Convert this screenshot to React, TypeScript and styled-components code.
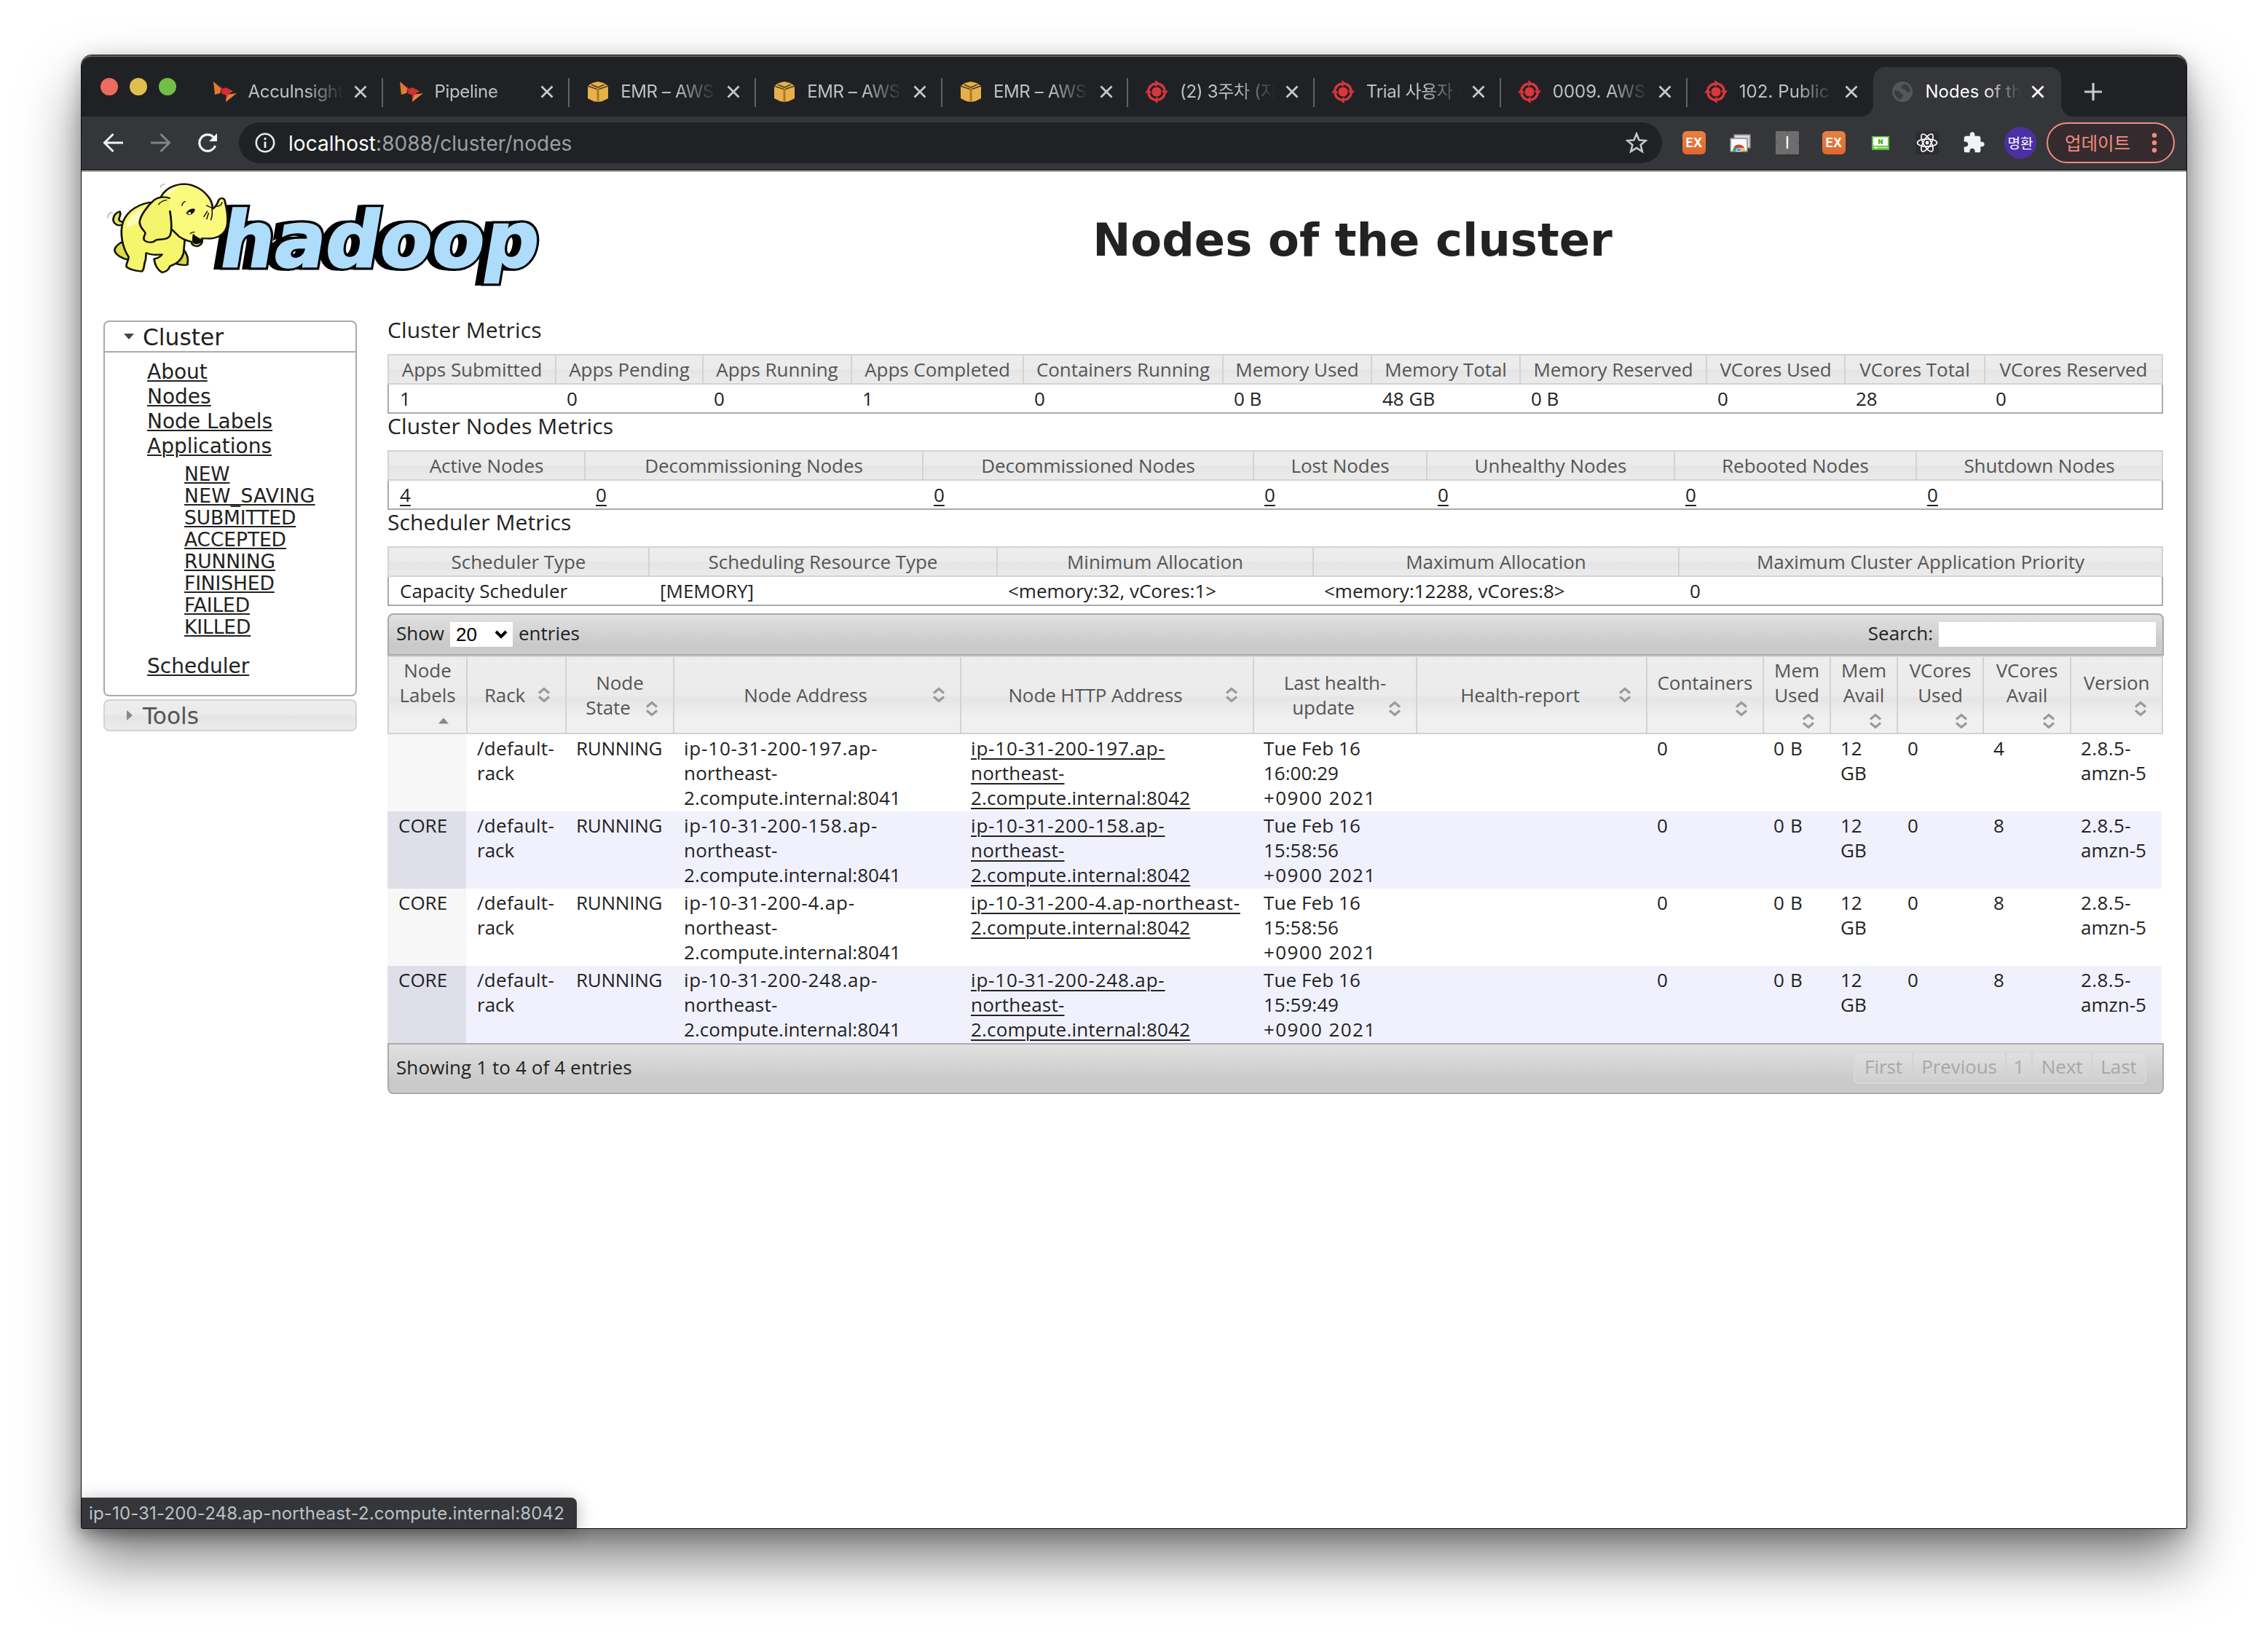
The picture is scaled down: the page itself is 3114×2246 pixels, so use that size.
import React from "react";
import styled, { createGlobalStyle, css } from "styled-components";

const chromeFont = `Inter, "Noto Sans CJK KR", sans-serif`;
const pageFont = `"Open Sans", "Noto Sans CJK KR", sans-serif`;
const navFont = `"DejaVu Sans", sans-serif`;

const GlobalStyle = createGlobalStyle`
  * { box-sizing: border-box; }
  body { margin: 0; background: #fff; }
`;

/* ---------- window ---------- */

const Desktop = styled.div`
  width: 3114px;
  height: 2246px;
  padding: 76px 112px 0;
  overflow: hidden;
  background: #fff;
`;

const BrowserWindow = styled.div`
  position: relative;
  display: flex;
  flex-direction: column;
  width: 2890px;
  height: 2022px;
  border-radius: 14px 14px 2px 2px;
  background: #fff;
  box-shadow: 0 0 0 1px #0a0d0a, 0 44px 80px rgba(0, 0, 0, 0.5), 0 8px 28px rgba(0, 0, 0, 0.25);
`;

const TabStrip = styled.div`
  display: flex;
  align-items: flex-end;
  height: 84px;
  padding-left: 26px;
  border-top: 2px solid #60655f;
  border-radius: 14px 14px 0 0;
  background: #202124;
`;

const TrafficLights = styled.div`
  display: flex;
  gap: 16px;
  width: 131px;
  padding-bottom: 29px;
`;

const Light = styled.span<{ $color: string }>`
  width: 24px;
  height: 24px;
  border-radius: 50%;
  background: ${(p) => p.$color};
`;

const TabItem = styled.div<{ $active?: boolean; $divider?: boolean }>`
  position: relative;
  display: flex;
  align-items: center;
  width: 255.9px;
  height: 68px;
  padding-left: 23px;
  border-radius: 16px 16px 0 0;
  color: #bdc1c6;
  ${(p) =>
    p.$divider &&
    css`
      &::after {
        content: "";
        position: absolute;
        right: -1px;
        top: 15px;
        width: 2px;
        height: 40px;
        background: #5f6165;
      }
    `}
  ${(p) =>
    p.$active &&
    css`
      width: 258px;
      background: #35363a;
      color: #fff;
      &::before,
      &::after {
        content: "";
        position: absolute;
        bottom: 0;
        width: 16px;
        height: 16px;
      }
      &::before {
        left: -16px;
        background: radial-gradient(circle at 0 0, transparent 15.5px, #35363a 16px);
      }
      &::after {
        right: -16px;
        background: radial-gradient(circle at 100% 0, transparent 15.5px, #35363a 16px);
      }
    `}
`;

const Favicon = styled.span`
  display: flex;
  justify-content: center;
  width: 34px;
  margin-right: 14.5px;
`;

const TabTitle = styled.span<{ $track?: number }>`
  width: 131px;
  overflow: hidden;
  white-space: nowrap;
  font: 24px/34px ${chromeFont};
  letter-spacing: ${(p) => p.$track ?? -0.3}px;
  -webkit-mask-image: linear-gradient(90deg, #000 60%, transparent 100%);
  mask-image: linear-gradient(90deg, #000 60%, transparent 100%);
`;

const CloseSlot = styled.span`
  display: flex;
  margin-left: 14.5px;
`;

const NewTab = styled.span`
  display: flex;
  margin: 0 0 22px 32px;
`;

const Toolbar = styled.div`
  display: flex;
  align-items: center;
  height: 76px;
  padding: 0 16px 2px 0;
  border-bottom: 2px solid #a9a9a9;
  box-shadow: inset 0 -2px 0 #29292c;
  background: #35363a;
`;

const NavButtons = styled.div`
  display: flex;
  gap: 36px;
  padding-left: 29px;
  width: 216px;
`;

const Omnibox = styled.div`
  display: flex;
  align-items: center;
  width: 1954px;
  height: 56px;
  padding: 0 20px 0 22px;
  border-radius: 28px;
  background: #202124;
`;

const Url = styled.span`
  flex: 1;
  margin-left: 18px;
  padding-top: 1px;
  font: 28px/40px ${chromeFont};
  letter-spacing: 0.05px;
  color: #9aa0a6;
`;

const UrlHost = styled.span`
  color: #fff;
`;

const Extensions = styled.div`
  display: flex;
  align-items: center;
  gap: 32px;
  margin-left: 28px;
`;

const ExBadge = styled.span`
  width: 32px;
  height: 32px;
  border-radius: 6px;
  background: linear-gradient(#e68241, #df6730);
  color: #fff;
  font: 700 17px/32px ${chromeFont};
  text-align: center;
`;

const Avatar = styled.span`
  width: 44px;
  height: 44px;
  margin: 0 14px 0 26px;
  border-radius: 50%;
  background: #4a30a2;
  color: #fff;
  font: 19px/43px "Noto Sans CJK KR", sans-serif;
  text-align: center;
`;

const UpdateButton = styled.div`
  display: flex;
  align-items: center;
  justify-content: space-between;
  width: 176px;
  height: 56px;
  padding: 0 22px 0 23px;
  border: 2.5px solid #f28b82;
  border-radius: 28px;
  background: #352b2e;
  color: #f28b82;
  font: 24.5px/40px "Noto Sans CJK KR", sans-serif;
`;

/* ---------- page ---------- */

const Page = styled.main`
  flex: 1;
  padding: 4px 31px 0 28px;
  color: #222;
  font: 26px/34px ${pageFont};
`;

const PageHeader = styled.header`
  display: flex;
  height: 196px;
`;

const Title = styled.h1`
  width: 2214px;
  margin: 0;
  padding-top: 50px;
  font: bold 62.4px/80px ${navFont};
  text-align: center;
`;

const Columns = styled.div`
  display: flex;
  gap: 42px;
`;

const Side = styled.nav`
  width: 348px;
  padding-top: 4px;
  margin-left: 2px;
  font-family: ${navFont};
`;

const SideHeader = styled.div<{ $closed?: boolean }>`
  display: flex;
  align-items: center;
  gap: 11px;
  height: 44px;
  padding-left: 25px;
  border: 2px solid ${(p) => (p.$closed ? "#d3d3d3" : "#aaa")};
  border-radius: ${(p) => (p.$closed ? "8px" : "8px 8px 0 0")};
  background: ${(p) => (p.$closed ? "linear-gradient(#ededed, #ebebeb 48%, #e5e5e5 54%, #ebebeb)" : "#fff")};
  color: ${(p) => (p.$closed ? "#555" : "#212121")};
  font-size: 31.3px;
  line-height: 38px;
  padding-top: 2px;
`;

const SideBody = styled.div`
  height: 472px;
  margin-bottom: 4px;
  padding: 10px 0 0 58px;
  border: 2px solid #aaa;
  border-top: 0;
  border-radius: 0 0 8px 8px;
`;

const SideLink = styled.a`
  display: block;
  width: fit-content;
  color: #222;
  font-size: 28px;
  line-height: 34px;
  text-decoration: underline 2px;
  text-underline-offset: 2px;
`;

const SubLinks = styled.div`
  margin: 6px 0 22px 51px;
`;

const SubLink = styled(SideLink)<{ $track: number }>`
  font-size: 26.5px;
  line-height: 30px;
  letter-spacing: ${(p) => p.$track}px;
`;

const Content = styled.section`
  width: 2439px;
`;

const Heading = styled.h3`
  height: 50px;
  margin: 0;
  font: 30px/34px ${pageFont};
  letter-spacing: 0.12px;
`;

const headBackground = css`
  background: linear-gradient(#ededed, #ebebeb 48%, #e5e5e5 53%, #ebebeb);
`;

const Metrics = styled.div<{ $cols: string }>`
  display: grid;
  grid-template-columns: ${(p) => p.$cols};
  width: 2438px;
  height: 82px;
`;

const MetricHead = styled.div`
  height: 42px;
  border: 2px solid #d3d3d3;
  border-right-width: 0;
  ${headBackground}
  color: #555;
  line-height: 38px;
  text-align: center;
  white-space: nowrap;
  letter-spacing: -0.05px;
  &:last-of-type {
    border-right-width: 2px;
  }
`;

const MetricCell = styled.span`
  height: 40px;
  padding-left: 16px;
  border-bottom: 2px solid #aaa;
  line-height: 38px;
  white-space: nowrap;
  &:first-of-type {
    padding-left: 15px;
    border-left: 2px solid #aaa;
  }
  &:last-of-type {
    border-right: 2px solid #aaa;
  }
`;

const Link = styled.a`
  color: #222;
  text-decoration: underline 2px;
  text-underline-offset: 4px;
`;

const barBackground = css`
  border: 2px solid #aaa;
  background: linear-gradient(#e1e1e1, #c9c9c9 78%, #cbcbcb);
`;

const TableBar = styled.div`
  display: flex;
  justify-content: space-between;
  height: 58px;
  margin-top: 10px;
  padding: 10px 9px 0 10px;
  border-radius: 8px 8px 0 0;
  ${barBackground}
`;

const BarGroup = styled.label`
  display: flex;
  height: 34px;
  line-height: 30px;
  gap: 8px;
`;

const PageSize = styled.span`
  display: flex;
  align-items: center;
  justify-content: space-between;
  width: 86px;
  height: 34px;
  padding: 0 7px 0 8px;
  background: #fff;
  color: #000;
  font: 26px/34px "Liberation Sans", Arial, sans-serif;
`;

const SearchInput = styled.input`
  width: 298px;
  height: 34px;
  padding: 0;
  border: 0;
  background: #fff;
`;

const nodeCols = "108px 136px 148px 394px 402px 224px 316px 160px 92px 92px 118px 120px 128px";

const NodeHeadRow = styled.div`
  display: grid;
  grid-template-columns: ${nodeCols};
  width: 2438px;
  height: 108px;
`;

const NodeHead = styled.div`
  display: flex;
  flex-direction: column;
  justify-content: center;
  border: 2px solid #d3d3d3;
  border-right-width: 0;
  padding: 0 13px;
  background: linear-gradient(#ededed, #ebebeb 50%, #e5e5e5 54%, #f0f0f0 80%, #f0f0f0);
  color: #555;
  text-align: center;
  white-space: nowrap;
  letter-spacing: -0.1px;
  &:last-child {
    border-right-width: 2px;
  }
`;

const HeadLine = styled.div`
  display: flex;
  justify-content: center;
  height: 34px;
  margin: 0 -8px;
`;

const HeadLastLine = styled.div`
  display: flex;
  height: 34px;
`;

const HeadLabel = styled.div`
  flex: 1;
`;

const SortSlot = styled.span<{ $drop: number }>`
  display: flex;
  align-items: center;
  justify-content: center;
  width: 32px;
  height: 34px;
  padding-top: ${(p) => p.$drop}px;
`;

const NodeRow = styled.div<{ $even: boolean }>`
  display: grid;
  grid-template-columns: ${nodeCols};
  width: 2436px;
  height: 106px;
  overflow: hidden;
  background: ${(p) => (p.$even ? "#f1f1fe" : "#fff")};
`;

const NodeCell = styled.div<{ $sorted?: string }>`
  padding: 2px 0 0 15px;
  white-space: nowrap;
  background: ${(p) => p.$sorted ?? "none"};
`;

const Line = styled.div<{ $track?: number }>`
  letter-spacing: ${(p) => p.$track ?? 0}px;
`;

const Footer = styled.div`
  display: flex;
  justify-content: space-between;
  height: 70px;
  padding: 10px 22px 0 10px;
  border-radius: 0 0 8px 8px;
  ${barBackground}
`;

const FooterInfo = styled.span`
  padding-top: 4px;
  letter-spacing: 0.1px;
`;

const Pager = styled.div`
  display: flex;
  height: 44px;
  border: 2px solid #d8d8d8;
  border-radius: 8px;
  background: rgba(255, 255, 255, 0.12);
  color: #a8a8a8;
  line-height: 37px;
`;

const PageButton = styled.span<{ $width: number }>`
  width: ${(p) => p.$width}px;
  text-align: center;
  letter-spacing: -0.1px;
  & + & {
    border-left: 2px solid #d3d3d3;
  }
`;

const StatusBubble = styled.div`
  position: absolute;
  left: 0;
  bottom: 0;
  width: 680px;
  height: 42px;
  padding-left: 10px;
  border-radius: 0 8px 0 0;
  background: #35363a;
  box-shadow: 0 4px 24px rgba(0, 0, 0, 0.3);
  color: #bdc1c6;
  font: 24px/43px ${chromeFont};
  letter-spacing: 0.15px;
  white-space: nowrap;
`;

/* ---------- drawings ---------- */

const CloseIcon = ({ color }: { color: string }) => (
  <svg width="18" height="18" viewBox="0 0 18 18">
    <path d="M1.5 1.5 16.5 16.5M16.5 1.5 1.5 16.5" stroke={color} strokeWidth="2.8" />
  </svg>
);

const AccuIcon = () => (
  <svg width="32" height="30" viewBox="0 0 32 30">
    <path d="M0 1 11 10 9 17 2 19Z" fill="#e07b30" />
    <path d="M3 4 18 13 13 18 9 16 11 11Z" fill="#a8242c" />
    <path d="M12 12 17 9 27 14 19 20 12 18Z" fill="#d22f36" />
    <path d="M18 19 32 17 17 29Z" fill="#e8823a" />
    <path d="M16 18 22 16 18 24Z" fill="#cc3036" />
  </svg>
);

const CubeIcon = () => (
  <svg width="28" height="28" viewBox="0 0 28 28">
    <path d="M14 0 22 2 28 6V23L20 27 14 28 8 27 0 23V6L6 2Z" fill="#e8b04a" />
    <path d="M0 6 13 10.500M28 6 15 10.500M5 4 14 8 23 4" fill="none" stroke="#54431f" strokeWidth="1.8" />
    <path d="M14 10V28" stroke="#a87c2d" strokeWidth="3" />
  </svg>
);

const TargetIcon = () => (
  <svg width="32" height="32" viewBox="0 0 32 32">
    <circle cx="16" cy="16" r="6.600" fill="#d9363e" />
    {[0, 90, 180, 270].map((a) => (
      <g key={a} transform={`rotate(${a} 16 16)`}>
        <path d="M5.200 12.500A11.400 11.400 0 0 1 14 4.900" fill="none" stroke="#d9363e" strokeWidth="3.600" />
        <path d="M14.500 0 21 5 14 9Z" fill="#d9363e" />
      </g>
    ))}
  </svg>
);

const GlobeIcon = () => (
  <svg width="28" height="28" viewBox="0 0 28 28">
    <circle cx="14" cy="14" r="14" fill="#55565a" />
    <path
      d="M3 12C7 12 10 13 11 15S16 17 15 20 11 22 12 25C7 24 3 19 3 12ZM17 3C15 5 12 6 13 9S19 9 19 12 23 15 25 14C25 9 22 5 17 3Z"
      fill="#3a3b3f"
    />
  </svg>
);

const ArrowIcon = ({ color, flip }: { color: string; flip?: boolean }) => (
  <svg width="29" height="28" viewBox="0 0 29 28">
    <path
      d="M28 14H3M14.500 2 2.500 14 14.500 26"
      transform={flip ? "translate(29 0) scale(-1 1)" : undefined}
      fill="none"
      stroke={color}
      strokeWidth="3"
    />
  </svg>
);

const ReloadIcon = () => (
  <svg width="28" height="28" viewBox="0 0 28 28">
    <path d="M24.500 18A11.200 11.200 0 1 1 22.500 6.800" fill="none" stroke="#f1f3f4" strokeWidth="3.200" />
    <path d="M27 1V12H16Z" fill="#f1f3f4" />
  </svg>
);

const InfoIcon = () => (
  <svg width="28" height="28" viewBox="0 0 28 28">
    <circle cx="14" cy="14" r="12.200" fill="none" stroke="#e8eaed" strokeWidth="2.600" />
    <path d="M14 12.500V21M14 7V10" stroke="#e8eaed" strokeWidth="2.800" />
  </svg>
);

const StarIcon = () => (
  <svg width="30" height="30" viewBox="0 0 30 30">
    <path
      d="M15 2.800 18.500 11.300 27.600 12 20.600 18 22.800 27 15 22.100 7.200 27 9.400 18 2.400 12 11.500 11.300Z"
      fill="none"
      stroke="#c4c7cb"
      strokeWidth="2.600"
    />
  </svg>
);

const TabsExtensionIcon = () => (
  <svg width="32" height="32" viewBox="0 0 32 32">
    <rect x="7" y="5" width="22" height="18" fill="#d8d8d8" stroke="#8a8a8a" strokeWidth="1.500" />
    <rect x="2" y="10" width="23" height="18" fill="#f7f7f7" stroke="#8a8a8a" strokeWidth="1.500" />
    <path d="M5 27.500A8.500 8.500 0 0 1 22 27.500Z" fill="#2fa152" />
    <path d="M6.500 22A8.500 8.500 0 0 1 21 23L13.500 24Z" fill="#cf4136" />
    <path d="M14 23H21A9 9 0 0 1 22 27.500H14Z" fill="#f5c231" />
    <path d="M9.500 27.500A4 4 0 0 1 17.500 27.500Z" fill="#4a86e8" stroke="#fff" strokeWidth="0.800" />
  </svg>
);

const BarExtensionIcon = () => (
  <svg width="32" height="32" viewBox="0 0 32 32">
    <rect width="32" height="32" rx="1.500" fill="#6d6d6d" />
    <path d="M16 7V24" stroke="#fff" strokeWidth="2.400" />
    <path d="M16 0V1.500M16 30.500V32M0 16H1.500M30.500 16H32" stroke="#4a4a4c" strokeWidth="1.500" />
  </svg>
);

const VideoExtensionIcon = () => (
  <svg width="32" height="32" viewBox="0 0 32 32">
    <rect x="4" y="7" width="24" height="19" fill="#5cc433" />
    <rect x="6" y="8.500" width="20" height="11.500" fill="#fff" />
    <text x="16" y="17.500" textAnchor="middle" fontFamily="Inter" fontWeight="900" fontSize="9" fill="#44b21c">
      N
    </text>
    <path d="M6 22.500H26" stroke="#d6f2c9" strokeWidth="1.400" />
    <circle cx="9.500" cy="22.500" r="1.600" fill="#fff" />
  </svg>
);

const AtomIcon = () => (
  <svg width="32" height="32" viewBox="0 0 32 32">
    <rect width="32" height="32" rx="3" fill="#2c2d30" />
    <g fill="none" stroke="#fff" strokeWidth="1.700">
      {[0, 60, 120].map((a) => (
        <ellipse key={a} cx="16" cy="16" rx="13.500" ry="5.200" transform={`rotate(${a} 16 16)`} />
      ))}
    </g>
    <circle cx="16" cy="16" r="2.400" fill="#fff" />
  </svg>
);

const PuzzleIcon = () => (
  <svg width="32" height="32" viewBox="0 0 24 24">
    <path
      fill="#f1f3f4"
      d="M20.500 11H19V7c0-1.100-.9-2-2-2h-4V3.500C13 2.120 11.880 1 10.500 1S8 2.120 8 3.500V5H4c-1.100 0-1.990.9-1.990 2v3.800H3.500c1.490 0 2.700 1.210 2.700 2.700s-1.210 2.700-2.700 2.700H2V20c0 1.100.9 2 2 2h3.800v-1.500c0-1.490 1.210-2.700 2.700-2.700 1.490 0 2.700 1.210 2.700 2.700V22H17c1.100 0 2-.9 2-2v-4h1.500c1.380 0 2.500-1.120 2.500-2.500S21.880 11 20.500 11z"
    />
  </svg>
);

const DotsIcon = () => (
  <svg width="8" height="28" viewBox="0 0 8 28" fill="#f28b82">
    <circle cx="4" cy="3.800" r="3.200" />
    <circle cx="4" cy="14" r="3.200" />
    <circle cx="4" cy="24.200" r="3.200" />
  </svg>
);

const SortIcon = () => (
  <svg width="18" height="22" viewBox="0 0 18 22">
    <path d="M2 8.500 9 2.500 16 8.500M2 13.500 9 19.500 16 13.500" fill="none" stroke="#999" strokeWidth="3.200" />
  </svg>
);

const SortedIcon = () => (
  <svg width="20" height="22" viewBox="0 0 20 22">
    <path d="M1 14.500H15L8 6.500Z" fill="#888" />
  </svg>
);

const DisclosureIcon = ({ open }: { open?: boolean }) => (
  <svg width="16" height="16" viewBox="0 0 16 16">
    {open ? <path d="M1 3H15L8 11Z" fill="#454545" /> : <path d="M5 0V14L13 7Z" fill="#888" />}
  </svg>
);

const SelectChevron = () => (
  <svg width="18" height="12" viewBox="0 0 18 12">
    <path d="M2 2 9 9 16 2" fill="none" stroke="#000" strokeWidth="4" />
  </svg>
);

const wordmark = {
  fontFamily: "DejaVu Sans",
  fontWeight: 700,
  fontSize: 106,
  textLength: 437,
  lengthAdjust: "spacingAndGlyphs",
} as const;

const HadoopLogo = () => (
  <svg width="610" height="160" viewBox="0 0 610 160">
    <g transform="translate(158 126) skewX(-9.500)">
      <g fill="#000" stroke="#000" strokeLinejoin="miter">
        <text x="-9" y="0" strokeWidth="8" {...wordmark}>hadoop</text>
        <text x="-5" y="0" strokeWidth="8" {...wordmark}>hadoop</text>
        <text x="0" y="0" strokeWidth="9" {...wordmark}>hadoop</text>
      </g>
      <text x="0" y="0" fill="#aedcfb" stroke="#aedcfb" strokeWidth="2.500" {...wordmark}>hadoop</text>
    </g>
    <g transform="scale(0.389 0.3333)" stroke="#14140c" strokeWidth="7" strokeLinejoin="round" strokeLinecap="round">
      <path d="M68 207C50 212 38 195 40 180C42 165 52 155 63 151C70 165 60 172 60 184C62 192 68 194 74 192" fill="#e4e464" />
      <path d="M68 278C55 288 42 300 45 314C50 330 70 345 92 350L110 300Z" fill="#dada4e" />
      <path d="M280 300C292 310 304 332 303 352L302 370C285 374 265 368 252 362Z" fill="#d8d848" />
      <path
        d="M185 112C130 115 88 150 74 195C62 240 72 300 94 338C94 355 84 366 86 378C96 392 124 396 141 398C152 385 146 370 154 350L156 322C172 330 196 330 212 328C206 338 196 344 184 346C186 366 194 390 212 402C226 400 236 392 240 376C262 368 282 350 288 322L292 270L240 160Z"
        fill="#f6f66c"
      />
      <path
        d="M205 100C216 62 252 38 292 38C330 40 362 66 380 98C388 112 390 128 391 140C402 132 408 118 412 104C418 94 428 94 433 104C440 140 446 170 442 205C438 240 410 266 372 262L352 262C358 276 350 292 334 294C320 292 316 284 316 276C300 272 284 264 271 253L225 200Z"
        fill="#fafa7c"
      />
      <path d="M322 245C320 262 318 270 322 280C328 288 346 284 352 272C350 262 336 262 322 245Z" fill="#0c0c06" strokeWidth="3" />
      <path
        d="M238 96C220 88 196 92 184 104C164 124 132 170 133 198C136 222 152 232 153 240C152 252 142 258 150 270C160 280 178 282 192 268C206 264 232 270 240 250C250 226 244 180 240 150"
        fill="#f4f46c"
      />
      <path d="M200 122C206 112 216 106 228 104M282 126C284 118 288 112 294 110M369 126C376 130 382 134 388 136M388 140C390 156 390 172 384 186M372 150C368 158 364 164 360 172M376 158C374 166 372 174 370 182M400 130C412 132 422 124 424 114M312 242C316 236 320 236 326 236" fill="none" strokeWidth="4" />
      <path d="M298 156C308 142 318 138 328 142C326 156 316 166 304 164Z" fill="#111" strokeWidth="2" />
      <ellipse cx="309" cy="158" rx="5" ry="5" fill="#fff" stroke="none" />
      <path d="M208 52C206 44 210 40 222 38M20 178C20 166 26 158 36 154" fill="none" stroke="#999" strokeWidth="3" />
      <path d="M226 72C240 52 260 50 270 56C252 66 240 78 236 88M86 220C88 180 110 150 150 134C140 160 128 178 128 196" fill="#fdfddc" stroke="none" opacity="0.700" />
    </g>
  </svg>
);

/* ---------- data ---------- */

const tabs: { icon: React.ReactNode; title: string; track?: number }[] = [
  { icon: <AccuIcon />, title: "AccuInsight+" },
  { icon: <AccuIcon />, title: "Pipeline" },
  { icon: <CubeIcon />, title: "EMR – AWS C", track: -0.4 },
  { icon: <CubeIcon />, title: "EMR – AWS C", track: -0.4 },
  { icon: <CubeIcon />, title: "EMR – AWS C", track: -0.4 },
  { icon: <TargetIcon />, title: "(2) 3주차 (지" },
  { icon: <TargetIcon />, title: "Trial 사용자 리" },
  { icon: <TargetIcon />, title: "0009. AWS", track: 0 },
  { icon: <TargetIcon />, title: "102. Public", track: 0.1 },
];

const clusterMetrics: [string, string, number][] = [
  ["Apps Submitted", "1", 230],
  ["Apps Pending", "0", 202],
  ["Apps Running", "0", 204],
  ["Apps Completed", "1", 236],
  ["Containers Running", "0", 274],
  ["Memory Used", "0 B", 204],
  ["Memory Total", "48 GB", 204],
  ["Memory Reserved", "0 B", 256],
  ["VCores Used", "0", 190],
  ["VCores Total", "28", 192],
  ["VCores Reserved", "0", 246],
];

const nodeMetrics: [string, string, number][] = [
  ["Active Nodes", "4", 270],
  ["Decommissioning Nodes", "0", 464],
  ["Decommissioned Nodes", "0", 454],
  ["Lost Nodes", "0", 238],
  ["Unhealthy Nodes", "0", 340],
  ["Rebooted Nodes", "0", 332],
  ["Shutdown Nodes", "0", 340],
];

const schedulerMetrics: [string, string, number][] = [
  ["Scheduler Type", "Capacity Scheduler", 358],
  ["Scheduling Resource Type", "[MEMORY]", 478],
  ["Minimum Allocation", "<memory:32, vCores:1>", 434],
  ["Maximum Allocation", "<memory:12288, vCores:8>", 502],
  ["Maximum Cluster Application Priority", "0", 666],
];

const nodeHeads: { lines: string[]; last: string; sorted?: boolean }[] = [
  { lines: ["Node", "Labels"], last: "", sorted: true },
  { lines: [], last: "Rack" },
  { lines: ["Node"], last: "State" },
  { lines: [], last: "Node Address" },
  { lines: [], last: "Node HTTP Address" },
  { lines: ["Last health-"], last: "update" },
  { lines: [], last: "Health-report" },
  { lines: ["Containers"], last: "" },
  { lines: ["Mem", "Used"], last: "" },
  { lines: ["Mem", "Avail"], last: "" },
  { lines: ["VCores", "Used"], last: "" },
  { lines: ["VCores", "Avail"], last: "" },
  { lines: ["Version"], last: "" },
];

const nodes = [
  { label: "", host: ["ip-10-31-200-197.ap-", "northeast-"], http: ["ip-10-31-200-197.ap-", "northeast-"], time: "16:00:29", avail: "4" },
  { label: "CORE", host: ["ip-10-31-200-158.ap-", "northeast-"], http: ["ip-10-31-200-158.ap-", "northeast-"], time: "15:58:56", avail: "8" },
  { label: "CORE", host: ["ip-10-31-200-4.ap-", "northeast-"], http: ["ip-10-31-200-4.ap-northeast-"], time: "15:58:56", avail: "8" },
  { label: "CORE", host: ["ip-10-31-200-248.ap-", "northeast-"], http: ["ip-10-31-200-248.ap-", "northeast-"], time: "15:59:49", avail: "8" },
];

const appStates = ["NEW", "NEW_SAVING", "SUBMITTED", "ACCEPTED", "RUNNING", "FINISHED", "FAILED", "KILLED"];

function MetricsTable({ rows, links }: { rows: [string, string, number][]; links?: boolean }) {
  return (
    <Metrics $cols={rows.map((r) => `${r[2]}px`).join(" ")}>
      {rows.map((r) => (
        <MetricHead key={r[0]}>{r[0]}</MetricHead>
      ))}
      {rows.map((r) => (
        <MetricCell key={r[0]}>{links ? <Link>{r[1]}</Link> : r[1]}</MetricCell>
      ))}
    </Metrics>
  );
}

export default function App() {
  return (
    <>
      <GlobalStyle />
      <Desktop>
        <BrowserWindow>
          <TabStrip>
            <TrafficLights>
              <Light $color="#ed6a5e" />
              <Light $color="#e0c04c" />
              <Light $color="#72be47" />
            </TrafficLights>
            {tabs.map((t, i) => (
              <TabItem key={i} $divider={i < tabs.length - 1}>
                <Favicon>{t.icon}</Favicon>
                <TabTitle $track={t.track}>{t.title}</TabTitle>
                <CloseSlot>
                  <CloseIcon color="#c6c9cd" />
                </CloseSlot>
              </TabItem>
            ))}
            <TabItem $active>
              <Favicon>
                <GlobeIcon />
              </Favicon>
              <TabTitle $track={0}>Nodes of the cluster</TabTitle>
              <CloseSlot>
                <CloseIcon color="#fff" />
              </CloseSlot>
            </TabItem>
            <NewTab>
              <svg width="24" height="24" viewBox="0 0 24 24">
                <path d="M12 0V24M0 12H24" stroke="#c6c9cd" strokeWidth="3.200" />
              </svg>
            </NewTab>
          </TabStrip>

          <Toolbar>
            <NavButtons>
              <ArrowIcon color="#f1f3f4" />
              <ArrowIcon color="#808285" flip />
              <ReloadIcon />
            </NavButtons>
            <Omnibox>
              <InfoIcon />
              <Url>
                <UrlHost>localhost</UrlHost>:8088/cluster/nodes
              </Url>
              <StarIcon />
            </Omnibox>
            <Extensions>
              <ExBadge>EX</ExBadge>
              <TabsExtensionIcon />
              <BarExtensionIcon />
              <ExBadge>EX</ExBadge>
              <VideoExtensionIcon />
              <AtomIcon />
              <PuzzleIcon />
            </Extensions>
            <Avatar>명환</Avatar>
            <UpdateButton>
              업데이트
              <DotsIcon />
            </UpdateButton>
          </Toolbar>

          <Page>
            <PageHeader>
              <HadoopLogo />
              <Title>Nodes of the cluster</Title>
            </PageHeader>

            <Columns>
              <Side>
                <SideHeader>
                  <DisclosureIcon open />
                  Cluster
                </SideHeader>
                <SideBody>
                  <SideLink>About</SideLink>
                  <SideLink>Nodes</SideLink>
                  <SideLink>Node Labels</SideLink>
                  <SideLink>Applications</SideLink>
                  <SubLinks>
                    {appStates.map((s) => (
                      <SubLink key={s} $track={s.includes("_") ? 0.35 : -0.1}>{s}</SubLink>
                    ))}
                  </SubLinks>
                  <SideLink>Scheduler</SideLink>
                </SideBody>
                <SideHeader $closed>
                  <DisclosureIcon />
                  Tools
                </SideHeader>
              </Side>

              <Content>
                <Heading>Cluster Metrics</Heading>
                <MetricsTable rows={clusterMetrics} />
                <Heading>Cluster Nodes Metrics</Heading>
                <MetricsTable rows={nodeMetrics} links />
                <Heading>Scheduler Metrics</Heading>
                <MetricsTable rows={schedulerMetrics} />

                <TableBar>
                  <BarGroup>
                    Show
                    <PageSize>
                      20
                      <SelectChevron />
                    </PageSize>
                    entries
                  </BarGroup>
                  <BarGroup>
                    Search:
                    <SearchInput />
                  </BarGroup>
                </TableBar>

                <NodeHeadRow>
                  {nodeHeads.map((h, i) => (
                    <NodeHead key={i}>
                      {h.lines.map((l) => (
                        <HeadLine key={l}>{l}</HeadLine>
                      ))}
                      <HeadLastLine>
                        <HeadLabel>{h.last}</HeadLabel>
                        <SortSlot $drop={h.lines.length ? 4 : 0}>{h.sorted ? <SortedIcon /> : <SortIcon />}</SortSlot>
                      </HeadLastLine>
                    </NodeHead>
                  ))}
                </NodeHeadRow>

                {nodes.map((n, i) => {
                  const even = i % 2 === 1;
                  return (
                    <NodeRow key={i} $even={even}>
                      <NodeCell $sorted={even ? "#dfdfea" : "#f7f7f7"}>{n.label}</NodeCell>
                      <NodeCell>
                        <Line $track={0.3}>/default-</Line>
                        <Line>rack</Line>
                      </NodeCell>
                      <NodeCell>
                        <Line $track={-0.25}>RUNNING</Line>
                      </NodeCell>
                      <NodeCell>
                        {n.host.map((l, k) => (
                          <Line key={l} $track={k === 0 ? 0.8 : 0.2}>{l}</Line>
                        ))}
                        <Line $track={0.05}>2.compute.internal:8041</Line>
                      </NodeCell>
                      <NodeCell>
                        {n.http.map((l, k) => (
                          <Line key={l} $track={k === 0 ? 0.82 : 0.2}>
                            <Link>{l}</Link>
                          </Line>
                        ))}
                        <Line $track={0.2}>
                          <Link>2.compute.internal:8042</Link>
                        </Line>
                      </NodeCell>
                      <NodeCell>
                        <Line $track={0.1}>Tue Feb 16</Line>
                        <Line>{n.time}</Line>
                        <Line $track={1.4}>+0900 2021</Line>
                      </NodeCell>
                      <NodeCell />
                      <NodeCell>0</NodeCell>
                      <NodeCell>
                        <Line $track={0.7}>0 B</Line>
                      </NodeCell>
                      <NodeCell>
                        <Line>12</Line>
                        <Line>GB</Line>
                      </NodeCell>
                      <NodeCell>0</NodeCell>
                      <NodeCell>{n.avail}</NodeCell>
                      <NodeCell>
                        <Line $track={0.4}>2.8.5-</Line>
                        <Line>amzn-5</Line>
                      </NodeCell>
                    </NodeRow>
                  );
                })}

                <Footer>
                  <FooterInfo>Showing 1 to 4 of 4 entries</FooterInfo>
                  <Pager>
                    <PageButton $width={78}>First</PageButton>
                    <PageButton $width={128}>Previous</PageButton>
                    <PageButton $width={36}>1</PageButton>
                    <PageButton $width={82}>Next</PageButton>
                    <PageButton $width={74}>Last</PageButton>
                  </Pager>
                </Footer>
              </Content>
            </Columns>
          </Page>

          <StatusBubble>ip-10-31-200-248.ap-northeast-2.compute.internal:8042</StatusBubble>
        </BrowserWindow>
      </Desktop>
    </>
  );
}
